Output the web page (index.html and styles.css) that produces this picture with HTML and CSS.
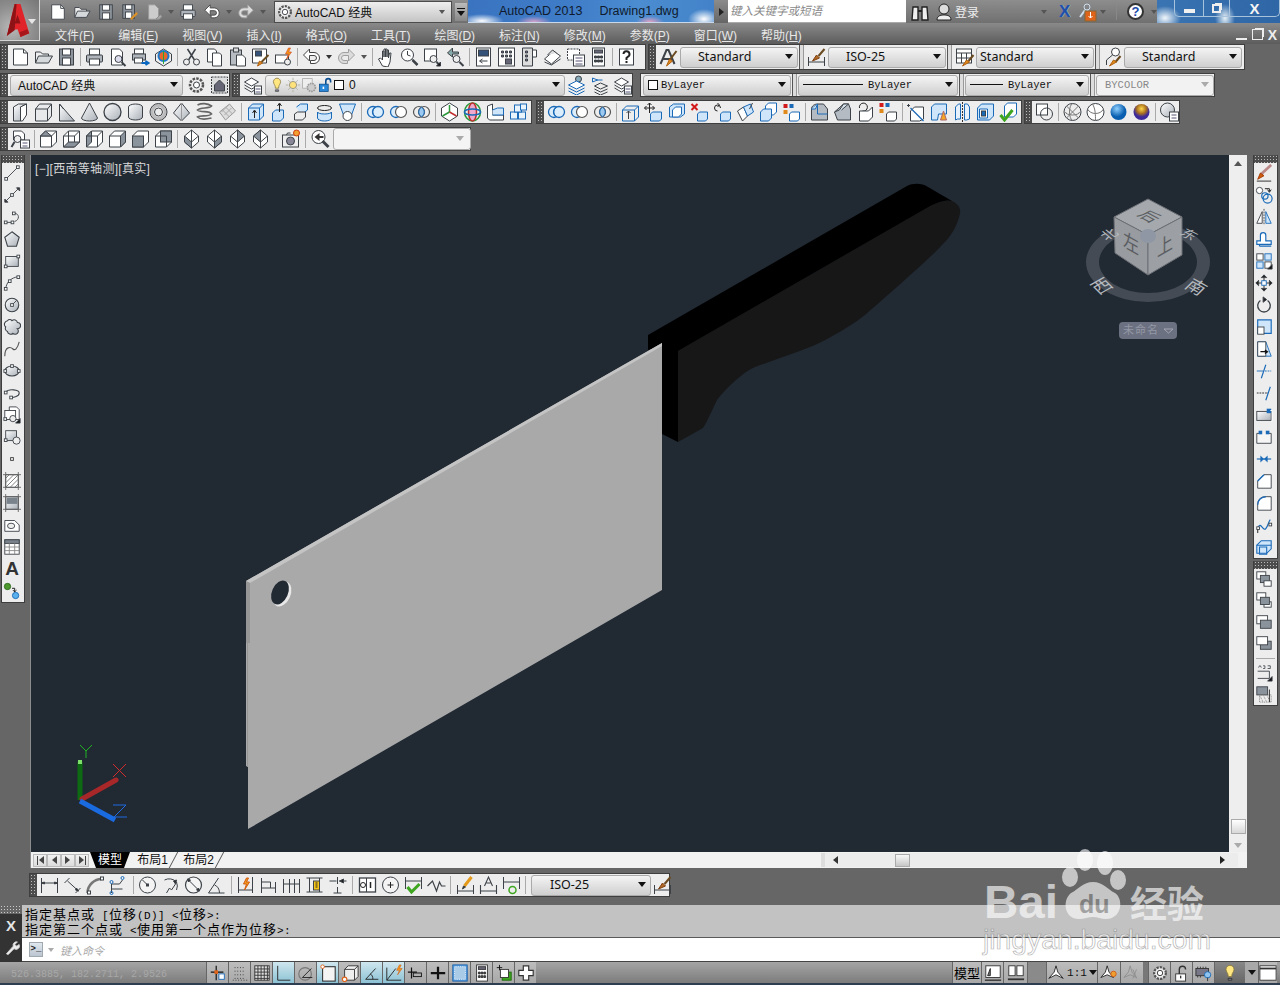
FILE: index.html
```html
<!DOCTYPE html>
<html lang="zh-CN">
<head>
<meta charset="utf-8">
<title>AutoCAD 2013 Drawing1.dwg</title>
<link rel="stylesheet" href="styles.css">
</head>
<body>
<svg class="sprite" aria-hidden="true">
<defs>
<linearGradient id="gs" x1="0" y1="0" x2="1" y2="1"><stop offset="0" stop-color="#fff"/><stop offset="1" stop-color="#a9b0b8"/></linearGradient>
<radialGradient id="gb" cx=".4" cy=".3"><stop offset="0" stop-color="#8fd0ff"/><stop offset="1" stop-color="#0a5fb0"/></radialGradient>
<radialGradient id="gy" cx=".5" cy=".3"><stop offset="0" stop-color="#ffd94a"/><stop offset=".6" stop-color="#a8701f"/><stop offset="1" stop-color="#3d2a9a"/></radialGradient>
<symbol id="new" viewBox="0 0 20 20"><path d="M3 2h10l4 4v12H3z" fill="#fff"/><path d="M13 2v4h4"/></symbol>
<symbol id="open" viewBox="0 0 20 20"><path d="M2 16V5h5l2 2h6v2" fill="#eee"/><path d="M2 16l3-7h14l-4 7z" fill="#d5d9dc"/></symbol>
<symbol id="save" viewBox="0 0 20 20"><rect x="3" y="2" width="14" height="16" fill="#8d949c"/><rect x="6" y="2" width="8" height="6" fill="#fff"/><rect x="6" y="11" width="8" height="7" fill="#fff"/></symbol>
<symbol id="saveas" viewBox="0 0 20 20"><rect x="2" y="2" width="13" height="15" fill="#8d949c"/><rect x="5" y="2" width="7" height="5" fill="#fff"/><rect x="5" y="10" width="7" height="7" fill="#fff"/><path d="M11 18l7-7" stroke="#d9902a" stroke-width="2.5"/></symbol>
<symbol id="plotd" viewBox="0 0 20 20"><path d="M4 2h7l4 4v12H4z" fill="#ccc" stroke="#999"/><path d="M12 18l5-5 2 2-3 3z" fill="#aaa" stroke="#888"/></symbol>
<symbol id="print" viewBox="0 0 20 20"><rect x="5" y="2" width="10" height="6" fill="#fff"/><rect x="2" y="8" width="16" height="7" rx="1" fill="#aeb4ba"/><rect x="5" y="12" width="10" height="6" fill="#fff"/></symbol>
<symbol id="prev" viewBox="0 0 20 20"><path d="M4 2h8l3 3v13H4z" fill="#fff"/><circle cx="11" cy="12" r="3.5" fill="#dde"/><path d="M14 15l4 4" stroke-width="2"/></symbol>
<symbol id="pub" viewBox="0 0 20 20"><rect x="4" y="2" width="9" height="5" fill="#fff"/><rect x="2" y="7" width="13" height="6" fill="#aeb4ba"/><rect x="4" y="11" width="8" height="5" fill="#fff"/><path d="M11 16h6m-2-2l3 2-3 2" stroke="#0a68c0" stroke-width="2"/></symbol>
<symbol id="p3d" viewBox="0 0 20 20"><path d="M2 7l8-5 8 5v7l-8 5-8-5z" fill="#eee"/><circle cx="10" cy="9" r="5" fill="#e7682a" stroke="#1b78cc" stroke-width="2"/><path d="M10 4v13" stroke="#2aa53a"/></symbol>
<symbol id="cut" viewBox="0 0 20 20"><path d="M6 2l7 11M14 2L7 13" stroke-width="1.5"/><circle cx="5" cy="15" r="3" fill="#eee"/><circle cx="15" cy="15" r="3" fill="#eee"/></symbol>
<symbol id="copy" viewBox="0 0 20 20"><path d="M3 2h7l2 2v11H3z" fill="#fff"/><path d="M8 6h7l2 2v11H8z" fill="#fff"/></symbol>
<symbol id="paste" viewBox="0 0 20 20"><rect x="3" y="3" width="11" height="15" fill="#b6bcc2"/><rect x="6" y="1" width="5" height="4" fill="#ddd"/><path d="M9 8h6l3 3v8H9z" fill="#fff"/></symbol>
<symbol id="brush" viewBox="0 0 20 20"><path d="M2 2h14v14H2z" fill="#fff"/><rect x="5" y="4" width="6" height="5" fill="#35527a"/><path d="M18 8l-7 7" stroke="#6a4a20" stroke-width="2"/><path d="M7 19l2-5 3 2z" fill="#e08a1c" stroke="#b06010"/></symbol>
<symbol id="blockl" viewBox="0 0 20 20"><rect x="2" y="8" width="13" height="8" fill="#fff"/><circle cx="14" cy="15" r="3" fill="#eee"/><path d="M15 1l-3 6h3l-2 5 5-7h-3l2-4z" fill="#f59a1a" stroke="#d03a10" stroke-width=".6"/></symbol>
<symbol id="undo" viewBox="0 0 20 20"><path d="M2 8l6-6v3.5h4.500a5.500 5.500 0 0 1 0 11H9v-3h3.500a2.500 2.500 0 0 0 0-5H8V14z" fill="#fff" stroke="#444"/></symbol>
<symbol id="redo" viewBox="0 0 20 20"><path d="M18 8l-6-6v3.500H7.500a5.500 5.500 0 0 0 0 11H11v-3H7.500a2.500 2.500 0 0 1 0-5H12V14z" fill="#dcdcdc" stroke="#a0a0a0"/></symbol>
<symbol id="pan" viewBox="0 0 20 20"><path d="M6 19l-4-7 2-1 2 2V4h1.500v6-8H9v8-8h1.500v8-7H12v8l1-5h1.500l-1 9-2 5z" fill="#fff"/></symbol>
<symbol id="zr" viewBox="0 0 20 20"><circle cx="8" cy="8" r="6" fill="#fff"/><path d="M8 4v4l3 1M12 12l6 6" /><path d="M13 13l5 5" stroke-width="2.500"/></symbol>
<symbol id="zw" viewBox="0 0 20 20"><rect x="2" y="2" width="12" height="12" fill="#fff"/><circle cx="11" cy="12" r="3.500" fill="#eee"/><path d="M14 15l3 3" stroke-width="2"/><path d="M18 15v4h-4z" fill="#111"/></symbol>
<symbol id="zp" viewBox="0 0 20 20"><path d="M7 1L2 6l5 4V7h6V5H7z" fill="#8aa"/><circle cx="11" cy="12" r="3.500" fill="#eee"/><path d="M14 15l4 4" stroke-width="2"/></symbol>
<symbol id="prop" viewBox="0 0 20 20"><rect x="3" y="1" width="14" height="18" fill="#fff"/><rect x="5" y="3" width="10" height="6" fill="#35527a"/><path d="M14 14H7m2-2l-3 2 3 2"/></symbol>
<symbol id="dc" viewBox="0 0 20 20"><rect x="2" y="1" width="16" height="18" fill="#fff"/><path d="M5 4h2v2H5zm4 0h2v2H9zm4 0h2v2h-2zM5 8h2v2H5zm4 0h2v2H9zm4 0h2v2h-2z" fill="#667"/><rect x="9" y="12" width="6" height="5" fill="#667"/></symbol>
<symbol id="tool" viewBox="0 0 20 20"><path d="M3 1h10v18H3z" fill="#ddd"/><path d="M13 3h4v7h-4z" fill="#fff"/><path d="M6 4h2v2H6zm0 4h2v2H6zm0 4h2v2H6z" fill="#778"/></symbol>
<symbol id="sheet" viewBox="0 0 20 20"><path d="M2 12l9-8 7 5-9 8z" fill="#fff"/><path d="M2 15l7 3 9-6" /><path d="M5 8l5-5 4 3" fill="#ddd"/></symbol>
<symbol id="mkup" viewBox="0 0 20 20"><rect x="2" y="2" width="12" height="11" fill="#fff" stroke-dasharray="2 1"/><rect x="8" y="8" width="11" height="11" fill="#fff"/><path d="M10 11h7m-7 3h7m-7 3h7" stroke="#557"/></symbol>
<symbol id="calc" viewBox="0 0 20 20"><rect x="4" y="1" width="12" height="18" fill="#fff"/><rect x="6" y="3" width="8" height="3" fill="#667"/><path d="M6 9h2v2H6zm3 0h2v2H9zm3 0h2v2h-2zm-6 4h2v2H6zm3 0h2v2H9zm3 0h2v2h-2z" fill="#444"/></symbol>
<symbol id="help" viewBox="0 0 20 20"><rect x="3" y="2" width="14" height="16" fill="#fff"/><path d="M7 7a3 3 0 1 1 4 3l-1 1v2M10 14v2" stroke-width="2" stroke="#222"/></symbol>
<symbol id="bstyle" viewBox="0 0 20 20"><path d="M2 17L8 3h2l6 14M5 12h8" stroke-width="2"/><path d="M18 4l-6 8" stroke="#6a4a20" stroke-width="2"/><path d="M8 19l3-7 3 2z" fill="#e08a1c" stroke="#b06010"/></symbol>
<symbol id="bdim" viewBox="0 0 20 20"><path d="M2 10v9M18 10v9M2 15h16"/><path d="M18 2l-6 7" stroke="#6a4a20" stroke-width="2"/><path d="M6 14l4-6 3 3z" fill="#b06a28" stroke="#804010"/></symbol>
<symbol id="btbl" viewBox="0 0 20 20"><rect x="2" y="2" width="15" height="14" fill="#fff"/><path d="M2 6h15M2 11h15M7 6v10M12 6v10"/><path d="M19 8l-5 6" stroke="#6a4a20" stroke-width="2"/><path d="M8 19l4-6 3 2z" fill="#e08a1c" stroke="#b06010"/></symbol>
<symbol id="bml" viewBox="0 0 20 20"><circle cx="13" cy="5" r="4" fill="#fff"/><path d="M10 8L4 13v5"/><path d="M18 9l-5 6" stroke="#6a4a20" stroke-width="2"/><path d="M7 19l4-6 3 2z" fill="#e08a1c" stroke="#b06010"/></symbol>
<symbol id="gear" viewBox="0 0 20 20"><circle cx="10" cy="10" r="6.500" fill="#eee" stroke="#555" stroke-dasharray="2.500 1.200" stroke-width="2.500"/><circle cx="10" cy="10" r="3" fill="#fff"/></symbol>
<symbol id="ws" viewBox="0 0 20 20"><rect x="2" y="2" width="16" height="16" fill="#ddd" stroke-dasharray="2 1"/><path d="M5 10l5-5 5 5v6H5z" fill="#667"/></symbol>
<symbol id="lman" viewBox="0 0 20 20"><path d="M2 7l7-4 7 4-7 4zM2 10l7 4 4-2M2 13l7 4 3-2" fill="#fff"/><rect x="12" y="11" width="7" height="8" fill="#fff"/><path d="M13 14h5m-5 3h5" stroke="#557"/></symbol>
<symbol id="bulb" viewBox="0 0 20 20"><path d="M6 8a4.500 4.500 0 1 1 8 0c-1 2-2 3-2 6H8c0-3-1-4-2-6z" fill="#ffe680" stroke="#8a7a40"/><path d="M8 16h4v2H8z" fill="#889"/></symbol>
<symbol id="sun" viewBox="0 0 20 20"><circle cx="10" cy="10" r="4.500" fill="#ffe27a" stroke="#887"/><path d="M10 1v3m0 12v3M1 10h3m12 0h3M4 4l2 2m8 8l2 2M16 4l-2 2M6 14l-2 2" stroke="#aa9"/></symbol>
<symbol id="fzv" viewBox="0 0 20 20"><rect x="2" y="2" width="12" height="12" fill="#eee" stroke="#aaa"/><circle cx="13" cy="13" r="5" fill="#ccc" stroke="#999" stroke-dasharray="2 1" stroke-width="2"/></symbol>
<symbol id="lock" viewBox="0 0 20 20"><rect x="3" y="9" width="11" height="9" fill="#2a87d8" stroke="#0d4f90"/><path d="M11 9V5a3 3 0 0 1 6 0v2" stroke="#0d4f90" stroke-width="2"/><path d="M8 12v3" stroke="#fff" stroke-width="2"/></symbol>
<symbol id="lmk" viewBox="0 0 20 20"><circle cx="12" cy="4" r="3" fill="#8ab"/><path d="M2 10l8-4 8 4-8 4z" fill="#fff" stroke="#1a6ab8"/><path d="M2 13l8 4 8-4M2 16l8 4 8-4" stroke="#1a6ab8"/></symbol>
<symbol id="lprev" viewBox="0 0 20 20"><path d="M3 3l5 2-5 2zM7 5h6" stroke="#1a6ab8"/><path d="M5 11l6-3 7 3-7 3zM5 14l6 3 7-3M5 17l6 3 7-3"/></symbol>
<symbol id="psolid" viewBox="0 0 20 20"><path d="M3 5l5-3h8l-6 3v14H3z" fill="url(#gs)"/><path d="M10 5l6-3v11l-4 6h-2z" fill="#fff"/></symbol>
<symbol id="box" viewBox="0 0 20 20"><path d="M2 7l4-5h12v12l-4 5H2z" fill="#e7e9eb"/><path d="M2 7h12v12M14 7l4-5"/></symbol>
<symbol id="wedge" viewBox="0 0 20 20"><path d="M3 2l15 17H3z" fill="url(#gs)"/><path d="M3 2l4 5"/></symbol>
<symbol id="cone" viewBox="0 0 20 20"><path d="M10 1L2 16a8 3 0 0 0 16 0z" fill="url(#gs)"/></symbol>
<symbol id="sphere" viewBox="0 0 20 20"><circle cx="10" cy="10" r="8.500" fill="url(#gs)" stroke-width="1.300"/></symbol>
<symbol id="cyl" viewBox="0 0 20 20"><path d="M3 5a7 3 0 0 1 14 0v10a7 3 0 0 1-14 0z" fill="url(#gs)"/></symbol>
<symbol id="torus" viewBox="0 0 20 20"><circle cx="10" cy="10" r="6.500" stroke="#bbb" stroke-width="3"/><circle cx="10" cy="10" r="8.500"/><circle cx="10" cy="10" r="4"/></symbol>
<symbol id="pyr" viewBox="0 0 20 20"><path d="M10 1l8 10-8 8-8-8z" fill="url(#gs)"/><path d="M10 1v18" stroke="#999"/></symbol>
<symbol id="helix" viewBox="0 0 20 20"><path d="M3 3c4-2 10-2 14 1-2 3-11 1-14 4 3 3 12 0 14 4-3 3-11 1-14 3 3 3 10 2 14 1" stroke="#666" stroke-width="1.700"/></symbol>
<symbol id="plane" viewBox="0 0 20 20"><path d="M2 10l10-8 6 7-10 9z" fill="#ddd" stroke="#999"/><path d="M5 8l7 7M8 5l7 7M7 13l7-7M4 10l7-7" stroke="#aaa"/></symbol>
<symbol id="ext" viewBox="0 0 20 20"><path d="M3 6l4-4h11v12l-4 4H3z" fill="#cfe6fa" stroke="#1a6ab8"/><path d="M3 6h11v12M14 6l4-4" stroke="#1a6ab8"/><path d="M9 16V9m-2 2l2-3 2 3" stroke="#222"/></symbol>
<symbol id="pp" viewBox="0 0 20 20"><path d="M4 11l3-3h8v8l-3 3H4z" fill="#cfe6fa" stroke="#1a6ab8"/><path d="M11 10V2M9 4l2-3 2 3" stroke="#222"/></symbol>
<symbol id="sweep" viewBox="0 0 20 20"><path d="M5 5l4-3h7v6l-4 3H8" fill="#cfe6fa" stroke="#1a6ab8"/><path d="M3 12l3-2h8v5l-3 3H3z" fill="#eee"/></symbol>
<symbol id="rev" viewBox="0 0 20 20"><ellipse cx="10" cy="6" rx="7" ry="2.500" stroke="#222"/><path d="M3 10a7 2 0 0 0 14 0v6a7 3 0 0 1-14 0z" fill="#cfe6fa" stroke="#1a6ab8"/></symbol>
<symbol id="loft" viewBox="0 0 20 20"><path d="M2 2h16l-4 11H6z" fill="#cfe6fa" stroke="#1a6ab8"/><circle cx="10" cy="14" r="4.500" fill="#fff"/></symbol>
<symbol id="uni" viewBox="0 0 20 20"><circle cx="7.500" cy="10" r="5.500" fill="#dcedfb" stroke="#1a6ab8" stroke-width="1.300"/><circle cx="12.500" cy="10" r="5.500" fill="#dcedfb" stroke="#1a6ab8" stroke-width="1.300"/><path d="M10 5.200a5.500 5.500 0 0 0 0 9.600" stroke="#1a6ab8"/></symbol>
<symbol id="sub" viewBox="0 0 20 20"><circle cx="7.500" cy="10" r="5.500" fill="#dcedfb" stroke="#1a6ab8" stroke-width="1.300"/><circle cx="12.500" cy="10" r="5.500" fill="#fff" stroke="#555" stroke-width="1.200"/></symbol>
<symbol id="int" viewBox="0 0 20 20"><circle cx="7.500" cy="10" r="5.500" stroke="#555" stroke-width="1.200"/><circle cx="12.500" cy="10" r="5.500" stroke="#555" stroke-width="1.200"/><path d="M10 5.200a5.500 5.500 0 0 1 0 9.600 5.500 5.500 0 0 1 0-9.600z" fill="#9cc9ef" stroke="#1a6ab8"/></symbol>
<symbol id="gmove" viewBox="0 0 20 20"><path d="M10 1l8 5v8l-8 5-8-5V6z" fill="#fff"/><path d="M10 10V3" stroke="#2a9a3a" stroke-width="1.500"/><path d="M10 10l-7 4" stroke="#2a9a3a" stroke-width="1.500"/><path d="M10 10l7 4" stroke="#c03030" stroke-width="1.500"/></symbol>
<symbol id="grot" viewBox="0 0 20 20"><ellipse cx="10" cy="10" rx="8" ry="9" stroke="#2a9a3a" stroke-width="1.500"/><ellipse cx="10" cy="10" rx="4" ry="9" fill="#eac" stroke="#c03030" stroke-width="1.500"/><ellipse cx="10" cy="10" rx="8" ry="3" stroke="#1a6ab8" stroke-width="1.500"/></symbol>
<symbol id="galign" viewBox="0 0 20 20"><path d="M2 16V4l5-2v11h11v5H4z" fill="#fff"/><path d="M7 8l5-2h6v7H7" fill="#cfe6fa" stroke="#1a6ab8"/></symbol>
<symbol id="garr" viewBox="0 0 20 20" stroke="#1a6ab8"><rect x="2" y="10" width="7" height="7" fill="#eaf4fd"/><rect x="10" y="10" width="7" height="7" fill="#eaf4fd"/><rect x="6" y="3" width="7" height="7" fill="#eaf4fd"/><rect x="12" y="2" width="6" height="6" fill="#eaf4fd"/></symbol>
<symbol id="cimp" viewBox="0 0 20 20"><path d="M2 8l4-4h12v11l-4 4H2z" fill="#eee" stroke="#1a6ab8"/><path d="M2 8h12v11M14 8l4-4" stroke="#1a6ab8"/><path d="M8 17V9m-2 2l2-2 2 2"/></symbol>
<symbol id="cmove" viewBox="0 0 20 20"><path d="M6 1v10M1 6h10M4 3l2-2 2 2M3 4L1 6l2 2M9 4l2 2-2 2" stroke="#222"/><path d="M7 12l2-2h9v7l-2 2H7z" fill="#cfe6fa" stroke="#1a6ab8"/></symbol>
<symbol id="cext" viewBox="0 0 20 20"><path d="M3 5l4-3h11v10l-4 3H3z" fill="#cfe6fa" stroke="#1a6ab8"/><path d="M6 8l3-3h6v7l-3 3H6z" fill="#fff" stroke="#1a6ab8"/></symbol>
<symbol id="cdel" viewBox="0 0 20 20"><path d="M2 2l6 6M8 2L2 8" stroke="#d21a1a" stroke-width="2"/><path d="M8 12l2-2h8v7l-2 2H8z" fill="#cfe6fa" stroke="#1a6ab8"/></symbol>
<symbol id="crot" viewBox="0 0 20 20"><path d="M8 6a3 3 0 1 0-3 3M5 1l2 2-2 2" stroke="#222"/><path d="M8 12l2-2h8v7l-2 2H8z" fill="#cfe6fa" stroke="#1a6ab8"/></symbol>
<symbol id="ctap" viewBox="0 0 20 20"><path d="M2 9l6-4 4 9-5 5z" fill="#fff"/><path d="M8 5l7-3 3 8-6 4z" fill="#cfe6fa" stroke="#1a6ab8"/><path d="M14 7l3-6"/></symbol>
<symbol id="ccopy" viewBox="0 0 20 20"><path d="M7 4l3-3h8v9l-3 3H7z" fill="#fff" stroke="#1a6ab8"/><path d="M2 10l3-3h8v9l-3 3H2z" fill="#cfe6fa" stroke="#1a6ab8"/></symbol>
<symbol id="ccol" viewBox="0 0 20 20"><rect x="2" y="2" width="4" height="4" fill="#d21a1a" stroke="none"/><rect x="8" y="2" width="4" height="4" fill="#1a6ab8" stroke="none"/><rect x="2" y="8" width="4" height="4" fill="#e08a1c" stroke="none"/><path d="M8 12l2-2h8v7l-2 2H8z" fill="#fff" stroke="#1a6ab8"/></symbol>
<symbol id="efil" viewBox="0 0 20 20"><path d="M2 7c0-3 3-5 6-5h6l4 5v11H2z" fill="#b4bbc3"/><path d="M2 7l6-5M8 2v10h10" stroke="#1a6ab8"/><path d="M8 2l-2 5H2" fill="#cfe6fa" stroke="#1a6ab8"/></symbol>
<symbol id="echa" viewBox="0 0 20 20"><path d="M2 10l9-8h5l2 5v11H5z" fill="#b4bbc3"/><path d="M2 10l5-2 4-6h5l-7 6" fill="#d7e4ee"/></symbol>
<symbol id="ecol" viewBox="0 0 20 20"><path d="M4 6a4 4 0 1 1 3 3" stroke="#222" fill="none"/><path d="M4 9h9l4-4v10l-4 4H4z" fill="#fff"/></symbol>
<symbol id="ecc" viewBox="0 0 20 20"><rect x="1" y="1" width="4" height="4" fill="#d21a1a" stroke="none"/><rect x="7" y="1" width="4" height="4" fill="#1a6ab8" stroke="none"/><rect x="1" y="7" width="4" height="4" fill="#e08a1c" stroke="none"/><path d="M8 12l2-2h8v7l-2 2H8z" fill="#fff"/></symbol>
<symbol id="slice" viewBox="0 0 20 20"><path d="M2 5v-3m-1.500 1.500h3"/><path d="M4 9l4-4h9v12l-4 2H4z" fill="#fff"/><path d="M4 6l13 13" stroke="#1a6ab8" stroke-width="1.300"/></symbol>
<symbol id="imp" viewBox="0 0 20 20"><path d="M2 5l3-3h12v10H9l-1 6H2z" fill="#cfe6fa" stroke="#1a6ab8"/><path d="M14 9l-3 9h6z" fill="#f5a623" stroke="#a66"/></symbol>
<symbol id="sep3" viewBox="0 0 20 20"><path d="M3 5l3-3h2v15H5l-2 1zM12 2h3l2 3v12l-3 1h-2z" fill="#e6f1fb" stroke="#1a6ab8"/><path d="M10 0v20" stroke-dasharray="2 1" stroke="#333"/></symbol>
<symbol id="shell" viewBox="0 0 20 20"><path d="M2 6l4-4h12v12l-4 4H2z" fill="#cfe6fa" stroke="#1a6ab8"/><path d="M4 7h8v9H4z" fill="#fff" stroke="#1a6ab8"/><rect x="6" y="9" width="4" height="5" fill="#1a6ab8"/></symbol>
<symbol id="chk" viewBox="0 0 20 20"><path d="M6 4l3-3h9v11l-3 3H6z" fill="#fff" stroke="#1a6ab8"/><path d="M2 13l4 5 8-10" stroke="#3da51f" stroke-width="3"/></symbol>
<symbol id="sub2" viewBox="0 0 20 20"><rect x="2" y="2" width="11" height="11" fill="#fff"/><circle cx="12" cy="12" r="6"/></symbol>
<symbol id="swire" viewBox="0 0 20 20"><circle cx="10" cy="10" r="8.500" fill="#eee"/><path d="M4 4l12 12M16 4L4 16M3 10a7 3 0 0 0 14 0M10 2a3 8 0 0 0 0 16" stroke="#777"/></symbol>
<symbol id="shid" viewBox="0 0 20 20"><circle cx="10" cy="10" r="8.500" fill="#fff"/><path d="M2 7c3 6 13 6 16 0M7 2c3 5 3 11 3 17" stroke="#777"/></symbol>
<symbol id="sblue" viewBox="0 0 20 20"><circle cx="10" cy="10" r="8" fill="url(#gb)" stroke="none"/></symbol>
<symbol id="sgold" viewBox="0 0 20 20"><circle cx="10" cy="10" r="8" fill="url(#gy)" stroke="none"/></symbol>
<symbol id="smgr" viewBox="0 0 20 20"><circle cx="8" cy="8" r="7" fill="url(#gs)"/><rect x="10" y="10" width="9" height="9" fill="#fff"/><path d="M12 13h5m-5 3h5" stroke="#557"/></symbol>
<symbol id="vmgr" viewBox="0 0 20 20"><path d="M3 2h8l3 3v6H3z" fill="#fff"/><circle cx="7" cy="10" r="3.500" fill="#eee"/><path d="M4 13l-3 5" stroke-width="2"/><rect x="10" y="11" width="9" height="8" fill="#fff"/><path d="M12 14h5m-5 3h5" stroke="#557"/></symbol>
<symbol id="v1" viewBox="0 0 20 20"><path d="M7 2h11v11l-5 5H2V7z" fill="#fff"/><path d="M2 7h11v11M13 7l5-5"/><path d="M7 2l6 5H2z" fill="#8a929b"/></symbol>
<symbol id="v2" viewBox="0 0 20 20"><path d="M7 2h11v11l-5 5H2V7z" fill="#fff"/><path d="M2 7h11v11M13 7l5-5"/><path d="M2 18l5-5h11l-5 5z" fill="#8a929b"/><path d="M7 2v11"/></symbol>
<symbol id="v3" viewBox="0 0 20 20"><path d="M7 2h11v11l-5 5H2V7z" fill="#fff"/><path d="M2 7l5-5v11l-5 5z" fill="#8a929b"/><path d="M2 7h11v11M13 7l5-5"/></symbol>
<symbol id="v4" viewBox="0 0 20 20"><path d="M7 2h11v11l-5 5H2V7z" fill="#fff"/><path d="M13 7l5-5v11l-5 5z" fill="#8a929b"/><path d="M2 7h11v11"/></symbol>
<symbol id="v5" viewBox="0 0 20 20"><path d="M7 2h11v11l-5 5H2V7z" fill="#fff"/><rect x="2" y="7" width="11" height="11" fill="#8a929b"/></symbol>
<symbol id="v6" viewBox="0 0 20 20"><path d="M7 2h11v11l-5 5H2V7z" fill="#fff"/><rect x="7" y="2" width="11" height="11" fill="#8a929b"/><path d="M2 7h11v11"/></symbol>
<symbol id="iso1" viewBox="0 0 20 20"><path d="M10 1l7 6v6l-7 6-7-6V7z" fill="#fff"/><path d="M3 7l7 6v6l-7-6z" fill="#8a929b"/><path d="M10 1v12l7-6"/></symbol>
<symbol id="iso2" viewBox="0 0 20 20"><path d="M10 1l7 6v6l-7 6-7-6V7z" fill="#fff"/><path d="M17 7l-7 6v6l7-6z" fill="#8a929b"/><path d="M10 1v12L3 7"/></symbol>
<symbol id="iso3" viewBox="0 0 20 20"><path d="M10 1l7 6v6l-7 6-7-6V7z" fill="#fff"/><path d="M10 1l7 6-7 6z" fill="#8a929b"/><path d="M3 7l7 6v6"/></symbol>
<symbol id="iso4" viewBox="0 0 20 20"><path d="M10 1l7 6v6l-7 6-7-6V7z" fill="#fff"/><path d="M10 1L3 7l7 6z" fill="#8a929b"/><path d="M17 7l-7 6v6"/></symbol>
<symbol id="cam" viewBox="0 0 20 20"><rect x="2" y="6" width="16" height="12" fill="#eee"/><circle cx="10" cy="12" r="4" fill="#889"/><path d="M6 6l1-2h3"/><circle cx="16" cy="4" r="3" fill="#f0a030" stroke="#d03a10"/></symbol>
<symbol id="vback" viewBox="0 0 20 20"><circle cx="8" cy="8" r="6.500" fill="#fff"/><path d="M4 8l5-4v3h4v2H9v3z" fill="#333" stroke="none"/><path d="M12 12l6 6" stroke-width="3"/></symbol>
<symbol id="line" viewBox="0 0 20 20"><path d="M4 16L16 4"/><rect x="2" y="15" width="3" height="3" fill="#fff"/><rect x="15" y="2" width="3" height="3" fill="#fff"/></symbol>
<symbol id="xline" viewBox="0 0 20 20"><path d="M3 17L17 3"/><path d="M15 2h3.500v3.500zM2 14.500V18h3.500z" fill="#333"/><rect x="8.500" y="8.500" width="3" height="3" fill="#fff"/></symbol>
<symbol id="pline" viewBox="0 0 20 20"><path d="M3 16h8M13 6c5 0 6 7 0 9"/><rect x="1.500" y="14.500" width="3" height="3" fill="#fff"/><rect x="9" y="14.500" width="3" height="3" fill="#fff"/><rect x="10.500" y="4.500" width="3" height="3" fill="#fff"/></symbol>
<symbol id="polyg" viewBox="0 0 20 20"><path d="M10 2l8 6-3 10H5L2 8z" fill="url(#gs)" stroke-width="1.200"/></symbol>
<symbol id="rect" viewBox="0 0 20 20"><rect x="3" y="5" width="14" height="11" fill="url(#gs)"/><rect x="1.500" y="14.500" width="3" height="3" fill="#fff"/><rect x="15.500" y="3.500" width="3" height="3" fill="#fff"/></symbol>
<symbol id="arc" viewBox="0 0 20 20"><path d="M3 16C4 9 9 4 17 3"/><rect x="1.500" y="15" width="3" height="3" fill="#fff"/><rect x="15.500" y="2" width="3" height="3" fill="#fff"/><rect x="6" y="6.500" width="3" height="3" fill="#fff"/></symbol>
<symbol id="circ" viewBox="0 0 20 20"><circle cx="10" cy="10" r="7.500" fill="url(#gs)" stroke-width="1.200"/><path d="M10 10l5-5"/><rect x="8.500" y="8.500" width="3" height="3" fill="#fff"/></symbol>
<symbol id="cloud" viewBox="0 0 20 20"><path d="M5 3a3 3 0 0 1 5 0 3.500 3.500 0 0 1 6 2 3.500 3.500 0 0 1 0 7 3.500 3.500 0 0 1-5 5 3.500 3.500 0 0 1-6-2 3.500 3.500 0 0 1-2-5 4 4 0 0 1 2-7z" fill="url(#gs)" stroke-width="1.200"/></symbol>
<symbol id="spline" viewBox="0 0 20 20"><path d="M2 18C2 6 9 8 11 10s5 0 7-8" stroke-width="1.200" stroke="#555"/></symbol>
<symbol id="ell" viewBox="0 0 20 20"><ellipse cx="10" cy="10" rx="8" ry="5.500" fill="url(#gs)" stroke-width="1.200"/><rect x="8.500" y="3" width="3" height="3" fill="#fff"/><rect x="1" y="8.500" width="3" height="3" fill="#fff"/><rect x="16" y="8.500" width="3" height="3" fill="#fff"/></symbol>
<symbol id="ellarc" viewBox="0 0 20 20"><path d="M3 9c3-4 15-3 15 1s-6 5-9 5" stroke-width="1.200"/><rect x="1.500" y="8" width="3" height="3" fill="#fff"/><rect x="7.500" y="13.500" width="3" height="3" fill="#fff"/></symbol>
<symbol id="ins" viewBox="0 0 20 20"><path d="M7 1h8l3 3v11H7z" fill="#fff"/><rect x="2" y="5" width="12" height="10" fill="#fff"/><circle cx="11" cy="14" r="3.500" fill="#eee"/><rect x="1" y="13" width="3" height="3" fill="#fff"/><path d="M19 14v5h-5z" fill="#111"/></symbol>
<symbol id="mkb" viewBox="0 0 20 20"><rect x="3" y="3" width="12" height="11" fill="url(#gs)"/><circle cx="15" cy="14" r="4" fill="#eee"/><rect x="1.500" y="12" width="3" height="3" fill="#fff"/></symbol>
<symbol id="pt" viewBox="0 0 20 20"><rect x="8.500" y="8.500" width="3" height="3" fill="#fff" stroke="#333"/></symbol>
<symbol id="hatch" viewBox="0 0 20 20"><rect x="3" y="3" width="14" height="14" fill="#fff"/><path d="M3 7l4-4M3 12l9-9M3 17L17 3M8 17l9-9M13 17l4-4" stroke="#777"/><path d="M0 3h20M0 17h20M3 0v20M17 0v20" stroke="#666"/></symbol>
<symbol id="grad" viewBox="0 0 20 20"><rect x="3" y="3" width="14" height="14" fill="url(#gs)"/><rect x="4" y="4" width="12" height="7" fill="#7a838c" stroke="none"/><path d="M0 3h20M0 17h20M3 0v20M17 0v20" stroke="#666"/></symbol>
<symbol id="reg" viewBox="0 0 20 20"><path d="M2 5h11l5 5v7H2z" fill="#fff"/><ellipse cx="9" cy="11" rx="4" ry="3" fill="#eee"/></symbol>
<symbol id="tbl" viewBox="0 0 20 20"><rect x="2" y="2" width="16" height="16" fill="#fff"/><rect x="2" y="2" width="16" height="4" fill="#7a838c"/><path d="M2 10h16M2 14h16M7 6v12M13 6v12" stroke="#888"/></symbol>
<symbol id="addsel" viewBox="0 0 20 20"><circle cx="5" cy="5" r="3.500" fill="#4f9a2e" stroke="#2d6a1a"/><path d="M10 7h3v4m-2-2l2 2 2-2" stroke="#111"/><circle cx="14" cy="15" r="3.500" fill="#5ab0ec" stroke="#1a6ab8"/></symbol>
<symbol id="erase" viewBox="0 0 20 20"><path d="M18 1L7 11" stroke="#b88" stroke-width="3"/><path d="M3 17l3-7 4 3z" fill="#d05a10" stroke="#a03a00"/><path d="M2 19h16" stroke="#222"/></symbol>
<symbol id="copy2" viewBox="0 0 20 20"><circle cx="5" cy="5" r="3.500" fill="#fff"/><path d="M11 3h5v3m-2-2l2 3 2-3" stroke="#111"/><circle cx="14" cy="14" r="5" fill="none" stroke="#1a6ab8" stroke-width="1.300"/><circle cx="11" cy="11" r="3.500" stroke="#1a6ab8" stroke-width="1.300"/></symbol>
<symbol id="mirror" viewBox="0 0 20 20"><path d="M2 17L8 4v13z" fill="#fff"/><path d="M18 17L12 4v13z" fill="#cfe6fa" stroke="#1a6ab8"/><path d="M10 1v18" stroke-dasharray="2 1"/></symbol>
<symbol id="offs" viewBox="0 0 20 20"><path d="M2 16v-4h4V6a3 3 0 0 1 6 0v6h6v4z" fill="#fff" stroke="#1a6ab8" stroke-width="1.300"/><path d="M5 18v-2M18 18H5" stroke="#1a6ab8" stroke-width="1.300"/></symbol>
<symbol id="arr" viewBox="0 0 20 20"><rect x="2" y="2" width="7" height="7" fill="#fff"/><rect x="11" y="2" width="7" height="7" fill="#cfe6fa" stroke="#1a6ab8"/><rect x="2" y="11" width="7" height="7" fill="#cfe6fa" stroke="#1a6ab8"/><rect x="11" y="11" width="7" height="7" fill="#fff"/><path d="M19 14v5h-5z" fill="#111"/></symbol>
<symbol id="move" viewBox="0 0 20 20"><path d="M10 1v18M1 10h18" stroke="#222"/><path d="M10 1l-3 3h6zM10 19l-3-3h6zM1 10l3-3v6zM19 10l-3-3v6z" fill="#222"/><rect x="7.500" y="7.500" width="5" height="5" fill="#fff" stroke="#1a6ab8"/></symbol>
<symbol id="rot" viewBox="0 0 20 20"><path d="M14 5a7 7 0 1 1-8 0" stroke-width="1.500"/><path d="M9 1l4 3-4 3z" fill="#222"/></symbol>
<symbol id="scale" viewBox="0 0 20 20"><path d="M3 2h15v15H3z" fill="#cfe6fa" stroke="#1a6ab8" stroke-width="1.300"/><rect x="3" y="10" width="7" height="8" fill="#fff"/></symbol>
<symbol id="stretch" viewBox="0 0 20 20"><path d="M3 2h9l6 16H3z" fill="#cfe6fa" stroke="#1a6ab8"/><path d="M3 2h9v16H3z" fill="#fff"/><path d="M6 13h8m-3-2l3 2-3 2" stroke="#111" stroke-width="1.300"/></symbol>
<symbol id="trim" viewBox="0 0 20 20"><path d="M2 10h7" stroke="#1a6ab8"/><path d="M11 10h7" stroke="#1a6ab8" stroke-dasharray="2 1"/><path d="M7 18l5-15" stroke="#1a6ab8" stroke-width="1.300"/></symbol>
<symbol id="ext2" viewBox="0 0 20 20"><path d="M2 10h9" stroke="#222" stroke-dasharray="2 1"/><path d="M11 10h3"/><path d="M12 18l5-15" stroke="#1a6ab8" stroke-width="1.300"/></symbol>
<symbol id="brkp" viewBox="0 0 20 20"><rect x="2" y="6" width="16" height="10" fill="url(#gs)"/><rect x="13" y="3" width="5" height="5" fill="#1a6ab8" stroke="none"/><path d="M17 5h2v12h-1" stroke="#fff"/></symbol>
<symbol id="brk" viewBox="0 0 20 20"><path d="M6 6H2v11h16V6h-4" fill="#f5f5f5"/><rect x="4" y="3" width="4" height="4" fill="#1a6ab8" stroke="none"/><rect x="12" y="3" width="4" height="4" fill="#1a6ab8" stroke="none"/></symbol>
<symbol id="join" viewBox="0 0 20 20"><path d="M2 10h16" stroke="#1a6ab8" stroke-width="1.300"/><path d="M6 6l4 4-4 4zM14 6l-4 4 4 4z" fill="#1a6ab8" stroke="none"/></symbol>
<symbol id="cham" viewBox="0 0 20 20"><path d="M3 10l7-7h8v15H3z" fill="#fff"/><path d="M3 10l7-7" stroke="#1a6ab8" stroke-width="1.500"/></symbol>
<symbol id="fil" viewBox="0 0 20 20"><path d="M3 18V11a8 8 0 0 1 8-8h7v15z" fill="#fff"/><path d="M3 12a9 9 0 0 1 9-9" stroke="#1a6ab8" stroke-width="1.500"/></symbol>
<symbol id="ped" viewBox="0 0 20 20"><path d="M3 14c3-10 6 4 9 0s3-8 5-10" stroke="#1a6ab8" stroke-width="1.300"/><path d="M3 14v5" stroke="#444" stroke-width="1.300"/><rect x="2" y="12" width="3" height="3" fill="#fff"/><rect x="15.500" y="8" width="3" height="3" fill="#fff"/></symbol>
<symbol id="expl" viewBox="0 0 20 20"><path d="M2 8l5-5h11v9l-5 5H2z" fill="#cfe6fa" stroke="#1a6ab8" stroke-width="1.200"/><path d="M5 10h8v8H5zM2 8h16" stroke="#1a6ab8" stroke-width="1.200"/></symbol>
<symbol id="d1" viewBox="0 0 20 20"><rect x="2" y="2" width="10" height="8" fill="#fff"/><rect x="6" y="6" width="10" height="8" fill="#8a929b"/><rect x="10" y="12" width="8" height="6" fill="#fff"/></symbol>
<symbol id="d2" viewBox="0 0 20 20"><rect x="2" y="2" width="10" height="8" fill="#fff"/><rect x="10" y="12" width="8" height="6" fill="#fff"/><rect x="6" y="7" width="10" height="8" fill="#8a929b"/></symbol>
<symbol id="d3" viewBox="0 0 20 20"><rect x="2" y="3" width="12" height="9" fill="#fff"/><rect x="6" y="8" width="12" height="9" fill="#8a929b"/></symbol>
<symbol id="d4" viewBox="0 0 20 20"><rect x="6" y="8" width="12" height="9" fill="#8a929b"/><rect x="2" y="3" width="12" height="9" fill="#fff"/></symbol>
<symbol id="txtf" viewBox="0 0 20 20"><path d="M4 4l1-2h1l1 2M9 2h2v3H9M14 2h3v3h-3" stroke-width=".9"/><path d="M3 8h13v8H3" /><path d="M19 14v5h-5z" fill="#111"/></symbol>
<symbol id="hatb" viewBox="0 0 20 20"><rect x="2" y="2" width="12" height="9" fill="#8a929b"/><path d="M6 13l3 6M10 13l3 6M14 13l3 6M5 11h13v8H5z" stroke="#777" stroke-dasharray="1 1"/><path d="M16 5v14" stroke="#222"/></symbol>
<symbol id="dlin" viewBox="0 0 20 20"><path d="M2 3v15M18 3v15M2 8h16"/><path d="M2 8l3-1v2zM18 8l-3-1v2z" fill="#222"/></symbol>
<symbol id="dali" viewBox="0 0 20 20"><path d="M2 8l5-5M13 18l5-5M5 6l11 10"/><path d="M16 16l-3-1 1-2z" fill="#222"/></symbol>
<symbol id="darc" viewBox="0 0 20 20"><path d="M2 18c0-8 7-14 14-14" stroke-width="2.500" stroke="#777"/><rect x="15" y="2" width="3" height="3" fill="#fff"/><rect x="2" y="16" width="3" height="3" fill="#fff"/></symbol>
<symbol id="dord" viewBox="0 0 20 20"><path d="M3 18V9h8l3-4M3 14h11" /><circle cx="3" cy="7" r="1.500" stroke="#1a6ab8"/><circle cx="3" cy="18" r="1.500" stroke="#1a6ab8"/><circle cx="14" cy="3" r="1.500" stroke="#1a6ab8"/></symbol>
<symbol id="drad" viewBox="0 0 20 20"><circle cx="10" cy="10" r="8" fill="#f4f4f4"/><path d="M10 10L5 5" /><rect x="9" y="9" width="2" height="2"/></symbol>
<symbol id="djog" viewBox="0 0 20 20"><path d="M4 5a10 10 0 0 1 12 2 10 10 0 0 1 0 8"/><path d="M6 18l3-5 2 2 4-6"/><path d="M15 9l1-4-3 1z" fill="#222"/></symbol>
<symbol id="ddia" viewBox="0 0 20 20"><circle cx="10" cy="10" r="8" fill="#f4f4f4" stroke-width="1.200"/><path d="M4 4l12 12"/><path d="M4 4l3 1-2 2zM16 16l-3-1 2-2z" fill="#222"/></symbol>
<symbol id="dang" viewBox="0 0 20 20"><path d="M2 18h16M2 18L12 3M8 10c3 1 5 4 5 8"/></symbol>
<symbol id="dqk" viewBox="0 0 20 20"><path d="M3 2v16M17 2v16M3 15h14"/><path d="M11 3l-3 6h3l-2 6 5-8h-3l2-4z" fill="#f59a1a" stroke="#d05a10"/></symbol>
<symbol id="dbase" viewBox="0 0 20 20"><path d="M3 3v15M17 7v11M12 7v6M3 7h9M3 13h14"/></symbol>
<symbol id="dcont" viewBox="0 0 20 20"><path d="M2 4v14M8 4v14M13 4v14M18 4v14M2 9h16"/></symbol>
<symbol id="dspc" viewBox="0 0 20 20"><path d="M2 3h16M2 17h16M5 3v14M15 3v14"/><rect x="9" y="6" width="6" height="9" fill="#f5c518"/><path d="M11 8h2m-2 2h2m-2 2h2" stroke="#222"/></symbol>
<symbol id="dbrk" viewBox="0 0 20 20"><path d="M10 2v7M10 12v6M6 18h8M2 6h7M12 6h7"/><path d="M12 6l4-2v4z" fill="#222"/></symbol>
<symbol id="dtol" viewBox="0 0 20 20"><rect x="2" y="3" width="16" height="14" fill="#fff" stroke-width="1.300"/><path d="M9 3v14"/><circle cx="5.500" cy="10" r="2.500" stroke="#222"/><path d="M13 7v6" stroke="#222" stroke-width="1.500"/></symbol>
<symbol id="dcen" viewBox="0 0 20 20"><circle cx="10" cy="10" r="8" fill="#f4f4f4"/><path d="M10 7v6M7 10h6" stroke="#222"/></symbol>
<symbol id="dins" viewBox="0 0 20 20"><path d="M2 2v12M18 2v12M2 6h16"/><path d="M4 12l4 5 8-8" stroke="#3da51f" stroke-width="3"/></symbol>
<symbol id="djl" viewBox="0 0 20 20"><path d="M1 11l5-5 4 10 3-9 2 4h4" stroke-width="1.200"/></symbol>
<symbol id="ded" viewBox="0 0 20 20"><path d="M2 10v9M18 10v9M2 16h16"/><path d="M16 2l-7 9" stroke="#e59a1a" stroke-width="3"/><path d="M7 14l1-3 2 1z" fill="#222"/></symbol>
<symbol id="dte" viewBox="0 0 20 20"><path d="M2 10v9M18 10v9M2 16h16M6 11l4-9 4 9M8 8h4" stroke-width="1.100"/></symbol>
<symbol id="dup" viewBox="0 0 20 20"><path d="M2 2v12M18 2v12M2 7h16"/><circle cx="11" cy="15" r="3.500" stroke="#3da51f" stroke-width="1.500"/></symbol>
<symbol id="st1" viewBox="0 0 20 20"><path d="M8 2v16M2 9h14" stroke="#111" stroke-width="1.300"/><rect x="11" y="11" width="6" height="6" fill="#fff" stroke="#1a6ab8"/><rect x="6" y="7" width="4" height="4" fill="#e0631a" stroke="none"/></symbol>
<symbol id="st2" viewBox="0 0 20 20"><path d="M4 4h12M4 8h12M4 12h12M4 16h12M2 18h16" stroke="#333" stroke-dasharray="1 2"/></symbol>
<symbol id="st3" viewBox="0 0 20 20"><rect x="2" y="2" width="16" height="16" fill="#ddd"/><path d="M2 5.500h16M2 9h16M2 12.500h16M2 16h16M5.500 2v16M9 2v16M12.500 2v16M16 2v16"/></symbol>
<symbol id="st4" viewBox="0 0 20 20"><path d="M3 2v16h14" stroke="#222"/></symbol>
<symbol id="st5" viewBox="0 0 20 20"><circle cx="9" cy="11" r="7" stroke="#777" stroke-width="1.300"/><path d="M6 15L16 5M6 15h11" stroke="#222"/></symbol>
<symbol id="st6" viewBox="0 0 20 20"><rect x="4" y="3" width="14" height="16" fill="#f4f4f4" stroke-width="1.200"/><circle cx="4" cy="3" r="2" fill="#fff" stroke="#e0631a"/></symbol>
<symbol id="st7" viewBox="0 0 20 20"><path d="M4 6l4-4h11v12l-4 4H4z" fill="#eee"/><path d="M4 6h11v12M15 6l4-4"/><circle cx="4" cy="17" r="2.500" fill="#fff" stroke="#e0631a" stroke-width="1.300"/></symbol>
<symbol id="st8" viewBox="0 0 20 20"><path d="M3 17L14 5M3 17h14M8 11c2 1 3 3 3 6" stroke="#222"/></symbol>
<symbol id="st9" viewBox="0 0 20 20"><path d="M2 18l10-13M2 18h16M2 18V4" stroke="#222"/><path d="M16 1l-3 6h3l-2 5 5-7h-3l2-4z" fill="#f59a1a" stroke="#d05a10" stroke-width=".6"/></symbol>
<symbol id="st10" viewBox="0 0 20 20"><path d="M5 4v12M1 9h10" stroke="#111" stroke-width="1.300"/><rect x="7" y="10" width="9" height="4" stroke="#111"/></symbol>
<symbol id="st11" viewBox="0 0 20 20"><path d="M10 3v14M2 10h16" stroke="#111" stroke-width="2.500"/></symbol>
<symbol id="st12" viewBox="0 0 20 20"><rect x="2" y="1" width="16" height="18" fill="#5aa0e0" stroke="#1a5fa8"/><path d="M4 3h12v14H4z" fill="#a9cbe8" stroke="#fff" stroke-dasharray="1 1"/></symbol>
<symbol id="st14" viewBox="0 0 20 20"><path d="M2 4h6M5 1v6" stroke="#111"/><rect x="8" y="9" width="10" height="9" fill="#3da51f" stroke="#1e6a0a"/><rect x="6" y="6" width="9" height="9" fill="#fff"/></symbol>
<symbol id="st15" viewBox="0 0 20 20"><path d="M7 2h6v5h5v6h-5v5H7v-5H2V7h5z" fill="#fff" stroke-width="1.300"/></symbol>
<symbol id="st16" viewBox="0 0 20 20"><rect x="2" y="2" width="16" height="13" fill="#fff"/><path d="M7 13V5l-3 8z" stroke="#222" fill="#777"/><path d="M1 18h18" stroke-width="1.500"/></symbol>
<symbol id="st17" viewBox="0 0 20 20"><rect x="2" y="2" width="7" height="11" fill="#fff"/><rect x="11" y="2" width="7" height="11" fill="#fff"/><path d="M1 17h18" stroke-width="2"/></symbol>
<symbol id="anno" viewBox="0 0 20 20"><path d="M10 2l2 7 6 7-8-4-8 4 6-7z" fill="#fff" stroke="#222"/></symbol>
<symbol id="anno2" viewBox="0 0 20 20"><path d="M8 2l2 7 5 6-7-3-7 3 5-6z" fill="#fff" stroke="#222"/><circle cx="15" cy="11" r="3" fill="#f0a030" stroke="#d05a10"/></symbol>
<symbol id="anno3" viewBox="0 0 20 20"><path d="M8 2l2 7 5 6-7-3-7 3 5-6zM15 6l-4 10M11 6l4 10" stroke="#8f8f8f"/></symbol>
<symbol id="tsb" viewBox="0 0 20 20"><rect x="3" y="11" width="11" height="8" fill="#fff"/><path d="M7 11V6a3.500 3.500 0 0 1 7 0" stroke-width="1.500"/><path d="M8.500 13v3" stroke-width="1.500"/></symbol>
<symbol id="hw" viewBox="0 0 20 20"><rect x="1" y="5" width="14" height="8" fill="#778"/><path d="M3 3v2m3-2v2m3-2v2m3-2v2M3 13v2m3-2v2" stroke="#333"/><circle cx="14" cy="12" r="3.500" fill="#8fc4f0" stroke="#1a6ab8"/><path d="M14 15v4"/></symbol>
<symbol id="clean" viewBox="0 0 20 20"><rect x="1" y="2" width="18" height="16" fill="#fff"/><path d="M1 5h18" stroke-width="2"/></symbol>
</defs>
</svg>

<div class="app">
  <header class="head">
    <div class="appbtn">
      <svg class="alogo" viewBox="0 0 40 41"><path d="M7 37L15 4h6l9 30-9 4-3-8-6 1z" fill="#e0242a"/><path d="M7 37L15 4l2 0-2 27z" fill="#8f1216"/><path d="M15 24l3-9 3 9z" fill="#8f1216"/><path d="M21 38l9-4-2-4-8 3z" fill="#a8161b"/></svg>
      <i class="tri appar"></i>
    </div>
    <div class="headr">
      <div class="titlebar">
        <div class="qat">
          <svg class="i q"><use href="#new"/></svg><svg class="i q"><use href="#open"/></svg><svg class="i q"><use href="#save"/></svg><svg class="i q"><use href="#saveas"/></svg><svg class="i q"><use href="#plotd"/></svg>
          <span class="arw"><i class="tri sm"></i></span>
          <svg class="i q"><use href="#print"/></svg><svg class="i q"><use href="#undo"/></svg>
          <span class="arw"><i class="tri sm"></i></span>
          <svg class="i q"><use href="#redo"/></svg>
          <span class="arw"><i class="tri sm"></i></span>
          <div class="wscombo"><svg class="i g"><use href="#gear"/></svg><span>AutoCAD 经典</span><i class="tri sm end"></i></div>
          <div class="qbtn"><i class="bar"></i><i class="tri blk"></i></div>
        </div>
        <div class="glass"><span class="t1">AutoCAD 2013</span><span class="t2">Drawing1.dwg</span></div>
        <div class="sbtn"><i class="tri right"></i></div>
        <div class="search">键入关键字或短语</div>
        <div class="tools">
          <svg class="ht" viewBox="0 0 20 20"><path d="M3 5h5v13H2zM12 5h5l1 13h-6z" fill="#eee" stroke="#222" stroke-width="1.400"/><path d="M8 9h4" stroke="#222" stroke-width="2"/></svg>
          <svg class="ht nm" viewBox="0 0 20 20"><circle cx="10" cy="7" r="5" fill="#ddd" stroke="#222"/><path d="M3 18c0-5 5-5 7-5s7 0 7 5z" fill="#eee" stroke="#222"/></svg>
          <span class="login">登录</span>
          <i class="tri sm t-a"></i>
          <span class="xbtn">X</span>
          <svg class="ht hd" viewBox="0 0 20 20"><circle cx="10" cy="5" r="3" stroke="#cde" fill="none"/><path d="M3 15l5-7M10 8l4 7" stroke="#cde" stroke-width="2"/><rect x="8" y="9" width="11" height="10" fill="#e0631a" stroke="#863"/><path d="M13.500 10v6m-2-2l2 2 2-2" stroke="#fff" fill="none"/></svg>
          <i class="tri sm t-b"></i>
          <span class="hsep"></span>
          <span class="hq">?</span>
          <i class="tri sm t-c"></i>
        </div>
        <div class="winctl">
          <div class="winframe"><span class="wb mn"><i class="wmin"></i></span><span class="wb"><i class="wmax"></i></span><span class="wb close">X</span></div>
        </div>
      </div>
      <nav class="menubar">
        <span>文件(<u>F</u>)</span><span>编辑(<u>E</u>)</span><span>视图(<u>V</u>)</span><span>插入(<u>I</u>)</span><span>格式(<u>O</u>)</span><span>工具(<u>T</u>)</span><span>绘图(<u>D</u>)</span><span>标注(<u>N</u>)</span><span>修改(<u>M</u>)</span><span>参数(<u>P</u>)</span><span>窗口(<u>W</u>)</span><span>帮助(<u>H</u>)</span>
        <div class="mdi"><i class="m1"></i><i class="m2"></i><b>X</b></div>
      </nav>
    </div>
  </header>

  <section class="rows">
    <div class="row">
      <div class="tb w-a"><i class="grip"></i>
        <svg class="i"><use href="#new"/></svg><svg class="i"><use href="#open"/></svg><svg class="i"><use href="#save"/></svg><i class="sep"></i>
        <svg class="i"><use href="#print"/></svg><svg class="i"><use href="#prev"/></svg><svg class="i"><use href="#pub"/></svg><svg class="i"><use href="#p3d"/></svg><i class="sep"></i>
        <svg class="i"><use href="#cut"/></svg><svg class="i"><use href="#copy"/></svg><svg class="i"><use href="#paste"/></svg><svg class="i"><use href="#brush"/></svg><svg class="i"><use href="#blockl"/></svg><i class="sep"></i>
        <svg class="i"><use href="#undo"/></svg><span class="arw s"><i class="tri sm k"></i></span><svg class="i"><use href="#redo"/></svg><span class="arw s"><i class="tri sm"></i></span><i class="sep"></i>
        <svg class="i"><use href="#pan"/></svg><svg class="i"><use href="#zr"/></svg><svg class="i"><use href="#zw"/></svg><svg class="i"><use href="#zp"/></svg><i class="sep"></i>
        <svg class="i"><use href="#prop"/></svg><svg class="i"><use href="#dc"/></svg><svg class="i"><use href="#tool"/></svg><svg class="i"><use href="#sheet"/></svg><svg class="i"><use href="#mkup"/></svg><svg class="i"><use href="#calc"/></svg><i class="sep"></i>
        <svg class="i"><use href="#help"/></svg>
      </div>
      <div class="tb w-b"><i class="grip"></i>
        <svg class="i"><use href="#bstyle"/></svg>
        <div class="combo cs"><span>Standard</span><i class="tri blk"></i></div><i class="dsep"></i>
        <svg class="i"><use href="#bdim"/></svg>
        <div class="combo cs"><span>ISO-25</span><i class="tri blk"></i></div><i class="dsep"></i>
        <svg class="i"><use href="#btbl"/></svg>
        <div class="combo cs left"><span>Standard</span><i class="tri blk"></i></div><i class="dsep"></i>
        <svg class="i"><use href="#bml"/></svg>
        <div class="combo cs"><span>Standard</span><i class="tri blk"></i></div>
      </div>
    </div>
    <div class="row">
      <div class="tb w-c"><i class="grip"></i>
        <div class="combo c-ws"><span>AutoCAD 经典</span><i class="tri blk"></i></div>
        <svg class="i"><use href="#gear"/></svg><svg class="i"><use href="#ws"/></svg>
      </div>
      <div class="tb w-d"><i class="grip"></i>
        <svg class="i"><use href="#lman"/></svg>
        <div class="combo c-layer">
          <svg class="ls"><use href="#bulb"/></svg><svg class="ls"><use href="#sun"/></svg><svg class="ls"><use href="#fzv"/></svg><svg class="ls"><use href="#lock"/></svg><i class="sw"></i><span>0</span><i class="tri blk"></i>
        </div>
        <svg class="i"><use href="#lmk"/></svg><svg class="i"><use href="#lprev"/></svg><svg class="i"><use href="#lman"/></svg>
      </div>
      <div class="tb w-e">
        <div class="combo mono c-col"><i class="sw"></i><span>ByLayer</span><i class="tri blk"></i></div><i class="dsep"></i>
        <div class="combo mono c-lt"><i class="ln l1"></i><span>ByLayer</span><i class="tri blk"></i></div><i class="dsep"></i>
        <div class="combo mono c-lw"><i class="ln l2"></i><span>ByLayer</span><i class="tri blk"></i></div><i class="dsep"></i>
        <div class="combo mono off c-pl"><span>BYCOLOR</span><i class="tri"></i></div>
      </div>
    </div>
    <div class="row">
      <div class="tb w-f"><i class="grip"></i>
        <svg class="i"><use href="#psolid"/></svg><svg class="i"><use href="#box"/></svg><svg class="i"><use href="#wedge"/></svg><svg class="i"><use href="#cone"/></svg><svg class="i"><use href="#sphere"/></svg><svg class="i"><use href="#cyl"/></svg><svg class="i"><use href="#torus"/></svg><svg class="i"><use href="#pyr"/></svg><svg class="i"><use href="#helix"/></svg><svg class="i"><use href="#plane"/></svg><i class="sep"></i>
        <svg class="i"><use href="#ext"/></svg><svg class="i"><use href="#pp"/></svg><svg class="i"><use href="#sweep"/></svg><svg class="i"><use href="#rev"/></svg><svg class="i"><use href="#loft"/></svg><i class="sep"></i>
        <svg class="i"><use href="#uni"/></svg><svg class="i"><use href="#sub"/></svg><svg class="i"><use href="#int"/></svg><i class="sep"></i>
        <svg class="i"><use href="#gmove"/></svg><svg class="i"><use href="#grot"/></svg><svg class="i"><use href="#galign"/></svg><svg class="i"><use href="#garr"/></svg>
      </div>
      <div class="tb w-g"><i class="grip"></i>
        <svg class="i"><use href="#uni"/></svg><svg class="i"><use href="#sub"/></svg><svg class="i"><use href="#int"/></svg><i class="sep"></i>
        <svg class="i"><use href="#cimp"/></svg><svg class="i"><use href="#cmove"/></svg><svg class="i"><use href="#cext"/></svg><svg class="i"><use href="#cdel"/></svg><svg class="i"><use href="#crot"/></svg><svg class="i"><use href="#ctap"/></svg><svg class="i"><use href="#ccopy"/></svg><svg class="i"><use href="#ccol"/></svg><i class="sep"></i>
        <svg class="i"><use href="#efil"/></svg><svg class="i"><use href="#echa"/></svg><svg class="i"><use href="#ecol"/></svg><svg class="i"><use href="#ecc"/></svg><i class="sep"></i>
        <svg class="i"><use href="#slice"/></svg><svg class="i"><use href="#imp"/></svg><svg class="i"><use href="#sep3"/></svg><svg class="i"><use href="#shell"/></svg><svg class="i"><use href="#chk"/></svg>
      </div>
      <div class="tb w-h"><i class="grip"></i>
        <svg class="i"><use href="#sub2"/></svg><i class="sep"></i>
        <svg class="i"><use href="#swire"/></svg><svg class="i"><use href="#shid"/></svg><svg class="i"><use href="#sblue"/></svg><svg class="i"><use href="#sgold"/></svg><i class="sep"></i>
        <svg class="i"><use href="#smgr"/></svg>
      </div>
    </div>
    <div class="row">
      <div class="tb w-i"><i class="grip"></i>
        <svg class="i"><use href="#vmgr"/></svg><i class="sep"></i>
        <svg class="i"><use href="#v1"/></svg><svg class="i"><use href="#v2"/></svg><svg class="i"><use href="#v3"/></svg><svg class="i"><use href="#v4"/></svg><svg class="i"><use href="#v5"/></svg><svg class="i"><use href="#v6"/></svg><i class="sep"></i>
        <svg class="i"><use href="#iso1"/></svg><svg class="i"><use href="#iso2"/></svg><svg class="i"><use href="#iso3"/></svg><svg class="i"><use href="#iso4"/></svg><i class="sep wide"></i>
        <svg class="i"><use href="#cam"/></svg><i class="sep wide"></i>
        <svg class="i"><use href="#vback"/></svg>
        <div class="combo blank"><i class="tri"></i></div>
      </div>
    </div>
  </section>

  <main class="work">
    <aside class="dock dl">
      <div class="vtb"><i class="vgrip"></i>
        <svg class="i"><use href="#line"/></svg><svg class="i"><use href="#xline"/></svg><svg class="i"><use href="#pline"/></svg><svg class="i"><use href="#polyg"/></svg><svg class="i"><use href="#rect"/></svg><svg class="i"><use href="#arc"/></svg><svg class="i"><use href="#circ"/></svg><svg class="i"><use href="#cloud"/></svg><svg class="i"><use href="#spline"/></svg><svg class="i"><use href="#ell"/></svg><svg class="i"><use href="#ellarc"/></svg><svg class="i"><use href="#ins"/></svg><svg class="i"><use href="#mkb"/></svg><svg class="i"><use href="#pt"/></svg><svg class="i"><use href="#hatch"/></svg><svg class="i"><use href="#grad"/></svg><svg class="i"><use href="#reg"/></svg><svg class="i"><use href="#tbl"/></svg><span class="bigA">A</span><svg class="i"><use href="#addsel"/></svg>
      </div>
    </aside>
    <div class="vp">
      <div class="vp-top">
        <div class="canvas">
          <span class="vlabel">[−][西南等轴测][真实]</span>
          <svg class="scene" viewBox="31 155 1198 697">
            <path d="M678 351L925 209C935 203 945 199 952 201C958 204 961 208 960 213C958 225 950 238 942 245C930 258 905 280 865 315C848 328 830 338 815 345C795 353 775 360 755 367C742 373 727 387 717 400C712 410 708 420 703 428L678 442Z" fill="#171717"/>
            <path d="M648 335L907 186C913 183 922 183 928 187L952 201C945 199 935 203 925 209L678 351V442L662 434V346L648 350Z" fill="#000"/>
            <path d="M246 581L662 343V590L248 829V767L246 766V643L246 641Z" fill="#a9a9a9"/>
            <path d="M246 581L662 343V346L250 583Z" fill="#c4c4c4"/>
            <path d="M246 581L250 583V643H246ZM247 643H248V767H247Z" fill="#969696"/>
            <ellipse cx="282" cy="594" rx="8.500" ry="13" transform="rotate(24 282 594)" fill="#e8e8e8"/>
            <ellipse cx="280" cy="592.500" rx="8" ry="12.500" transform="rotate(24 280 592.500)" fill="#212933"/>
            <path d="M80 800V762" stroke="#0d6a12" stroke-width="5"/><rect x="78" y="760" width="4" height="4" fill="#7de06a"/>
            <path d="M82 799L116 780" stroke="#a8282a" stroke-width="5" stroke-linecap="round"/>
            <path d="M80 801L115 820" stroke="#1a6ae0" stroke-width="5"/>
            <path d="M80 745l6 6 6-6M86 751v7" stroke="#1fb324" fill="none"/>
            <path d="M113 764l13 13M126 764l-13 13" stroke="#d02c2c" fill="none"/>
            <path d="M113 805h13l-12 12h13" stroke="#1f6ae0" fill="none"/>
            <path fill-rule="evenodd" d="M1086 262a62 40 0 1 0 124 0a62 40 0 1 0-124 0zM1099 262a49 31 0 1 0 98 0a49 31 0 1 0-98 0z" fill="#444b55"/>
            <path d="M1148 199L1182 217 1148 235 1114 217Z" fill="#a5a8ac" stroke="#6c7076"/>
            <path d="M1114 217L1148 235V275L1115 253Z" fill="#989b9f" stroke="#6c7076"/>
            <path d="M1148 235L1182 217V255L1148 275Z" fill="#9c9fa3" stroke="#6c7076"/>
            <ellipse cx="1148" cy="236" rx="8" ry="7" fill="#8f97a5"/>
            <g class="cubetxt">
              <text transform="matrix(.75 .4 -.75 .4 1148 217)">后</text>
              <text transform="matrix(.8 .45 0 1 1131 245)">左</text>
              <text transform="matrix(.8 -.45 0 1 1165 247)">上</text>
            </g>
            <g class="ringtxt">
              <text transform="matrix(.9 -.5 .7 .7 1103 287)">西</text>
              <text transform="matrix(.9 .5 -.7 .7 1195 288)">南</text>
              <text class="rs" transform="matrix(.8 -.4 .6 .5 1110 235)">北</text>
              <text class="rs" transform="matrix(.8 .4 -.6 .5 1188 235)">东</text>
            </g>
            <rect x="1119" y="322" width="58" height="17" rx="4" fill="#6c7181"/>
            <text class="cubename" x="1123" y="334">未命名</text>
            <path d="M1164 329h9l-4.500 4z" fill="none" stroke="#a2a6b3"/>
          </svg>
        </div>
        <div class="vscroll">
          <i class="tri up"></i>
          <span class="fill"></span>
          <i class="vthumb"></i>
          <i class="tri"></i>
        </div>
      </div>
      <div class="tabs">
        <div class="nav"><i class="n n1"></i><i class="n n2"></i><i class="n n3"></i><i class="n n4"></i></div>
        <span class="tab cur">模型</span><span class="tab">布局1</span><span class="tab">布局2</span>
        <span class="tabfill"></span>
        <div class="hscroll"><i class="tri left"></i><i class="hthumb"></i><span class="fill"></span><i class="tri right"></i></div>
      </div>
    </div>
    <aside class="dock dr">
      <div class="vtb"><i class="vgrip"></i>
        <svg class="i"><use href="#erase"/></svg><svg class="i"><use href="#copy2"/></svg><svg class="i"><use href="#mirror"/></svg><svg class="i"><use href="#offs"/></svg><svg class="i"><use href="#arr"/></svg><svg class="i"><use href="#move"/></svg><svg class="i"><use href="#rot"/></svg><svg class="i"><use href="#scale"/></svg><svg class="i"><use href="#stretch"/></svg><svg class="i"><use href="#trim"/></svg><svg class="i"><use href="#ext2"/></svg><svg class="i"><use href="#brkp"/></svg><svg class="i"><use href="#brk"/></svg><svg class="i"><use href="#join"/></svg><svg class="i"><use href="#cham"/></svg><svg class="i"><use href="#fil"/></svg><svg class="i"><use href="#ped"/></svg><svg class="i"><use href="#expl"/></svg>
      </div>
      <div class="vtb second"><i class="vgrip"></i>
        <svg class="i"><use href="#d1"/></svg><svg class="i"><use href="#d2"/></svg><svg class="i"><use href="#d3"/></svg><svg class="i"><use href="#d4"/></svg><i class="hsep2"></i>
        <svg class="i"><use href="#txtf"/></svg><svg class="i"><use href="#hatb"/></svg>
      </div>
    </aside>
  </main>

  <section class="dimrow">
    <div class="tb w-j"><i class="grip"></i>
      <svg class="i"><use href="#dlin"/></svg><svg class="i"><use href="#dali"/></svg><svg class="i"><use href="#darc"/></svg><svg class="i"><use href="#dord"/></svg><i class="sep"></i>
      <svg class="i"><use href="#drad"/></svg><svg class="i"><use href="#djog"/></svg><svg class="i"><use href="#ddia"/></svg><svg class="i"><use href="#dang"/></svg><i class="sep"></i>
      <svg class="i"><use href="#dqk"/></svg><svg class="i"><use href="#dbase"/></svg><svg class="i"><use href="#dcont"/></svg><svg class="i"><use href="#dspc"/></svg><svg class="i"><use href="#dbrk"/></svg><i class="sep"></i>
      <svg class="i"><use href="#dtol"/></svg><svg class="i"><use href="#dcen"/></svg><svg class="i"><use href="#dins"/></svg><svg class="i"><use href="#djl"/></svg><i class="sep"></i>
      <svg class="i"><use href="#ded"/></svg><svg class="i"><use href="#dte"/></svg><svg class="i"><use href="#dup"/></svg><i class="sep"></i>
      <div class="combo c-iso"><span>ISO-25</span><i class="tri blk"></i></div>
      <svg class="i"><use href="#bdim"/></svg>
    </div>
  </section>

  <section class="cmd">
    <div class="cmdside">
      <i class="cgrip"></i>
      <b class="cx">X</b>
      <svg class="wr" viewBox="0 0 20 20"><path d="M4 18l8-9a4 4 0 0 1 5-5l-3 3 2 2 3-2a4 4 0 0 1-6 5l-7 7z" fill="#eee" stroke="#ccc"/></svg>
    </div>
    <div class="cmdmain">
      <div class="cmdhist">
        <div class="hl">指定基点或<span class="lat"> [</span>位移<span class="lat">(D)] &lt;</span>位移<span class="lat">&gt;:</span></div>
        <div class="hl">指定第二个点或<span class="lat"> &lt;</span>使用第一个点作为位移<span class="lat">&gt;:</span></div>
      </div>
      <div class="cmdin"><span class="prompt">&gt;_</span><i class="tri sm"></i><em>键入命令</em></div>
    </div>
  </section>

  <footer class="status">
    <span class="coords">526.3885, 182.2711, 2.9526</span>
    <div class="sgroup">
      <span class="sb"><svg><use href="#st1"/></svg></span><span class="sb"><svg><use href="#st2"/></svg></span><span class="sb"><svg><use href="#st3"/></svg></span><span class="sb on"><svg><use href="#st4"/></svg></span><span class="sb"><svg><use href="#st5"/></svg></span><span class="sb on"><svg><use href="#st6"/></svg></span><span class="sb"><svg><use href="#st7"/></svg></span><span class="sb on"><svg><use href="#st8"/></svg></span><span class="sb on"><svg><use href="#st9"/></svg></span><span class="sb"><svg><use href="#st10"/></svg></span><span class="sb"><svg><use href="#st11"/></svg></span><span class="sb"><svg><use href="#st12"/></svg></span><span class="sb"><svg><use href="#calc"/></svg></span><span class="sb"><svg><use href="#st14"/></svg></span><span class="sb"><svg><use href="#st15"/></svg></span>
    </div>
    <div class="sright">
      <span class="sb txt">模型</span><span class="sb"><svg><use href="#st16"/></svg></span><span class="sb w"><svg><use href="#st17"/></svg></span>
      <span class="sb blankb"></span>
      <span class="sb ann"><svg><use href="#anno"/></svg><span>1:1</span><i class="tri blk"></i></span>
      <span class="sb w2"><svg><use href="#anno2"/></svg></span><span class="sb w2"><svg><use href="#anno3"/></svg></span>
      <span class="sgap"></span>
      <span class="sb"><svg><use href="#gear"/></svg></span><span class="sb"><svg><use href="#tsb"/></svg></span><span class="sb"><svg><use href="#hw"/></svg></span>
      <span class="sb isob"><svg><use href="#bulb"/></svg></span>
      <span class="sarrow"><i class="tri blk"></i></span>
      <span class="sb last"><svg><use href="#clean"/></svg></span>
    </div>
  </footer>

  <svg class="mark" viewBox="980 845 240 125">
    <g fill="#fff">
      <ellipse cx="1085" cy="860" rx="8" ry="11"/><ellipse cx="1105" cy="863" rx="8" ry="12"/><ellipse cx="1070" cy="877" rx="8" ry="10"/><ellipse cx="1118" cy="880" rx="8" ry="10"/>
      <path d="M1093 882c10 0 14 7 22 11 9 6 7 26-9 26-5 0-9-2-13-2s-9 2-14 2c-15 0-17-19-8-26 8-4 12-11 22-11z"/>
    </g>
    <text class="mk-b" x="984" y="918" textLength="74" lengthAdjust="spacingAndGlyphs">Bai</text>
    <text class="mk-du" x="1079" y="913">du</text>
    <text class="mk-c" x="1130" y="918">经验</text>
    <text class="mk-j" x="983" y="949" textLength="228" lengthAdjust="spacingAndGlyphs">jingyan.baidu.com</text>
  </svg>
</div>
</body>
</html>
```
FILE: styles.css
```css
*{box-sizing:border-box}
html,body{margin:0;padding:0;background:#666}
body{font-family:"Liberation Sans","Noto Sans CJK SC",sans-serif;font-size:12px;color:#111;overflow:hidden}
i{display:block;font-style:normal}
.sprite{position:absolute;width:0;height:0;overflow:hidden}
.app{position:relative;width:1280px;height:985px;display:flex;flex-direction:column;background:#666;overflow:hidden}

.tri{width:0;height:0;border-left:4px solid transparent;border-right:4px solid transparent;border-top:5px solid #aaa;flex:none}
.tri.sm{border-left-width:3px;border-right-width:3px;border-top:4px solid #555}
.tri.sm.k{border-top-color:#333}
.tri.blk{border-top-color:#111}
.tri.right{border:4px solid transparent;border-left:5px solid #222;border-right:0}
.tri.left{border:4px solid transparent;border-right:5px solid #333;border-left:0}
.tri.up{border-top:0;border-bottom:5px solid #555}

.head{display:flex;height:44px;flex:none;position:relative}
.appbtn{width:40px;height:41px;flex:none;position:relative;background:radial-gradient(circle at 30% 70%,#b9b9b9,#8f8f8f 55%,#767676);border:1px solid #d4d4d4;border-top:0;border-left:0}
.alogo{display:block;width:39px;height:40px}
.appar{position:absolute;right:3px;top:19px;border-top-color:#e6e6e6}
.headr{flex:1;display:flex;flex-direction:column;min-width:0}
.titlebar{height:23px;display:flex;flex:none}
.qat{width:428px;flex:none;display:flex;align-items:center;padding-left:6px;background:linear-gradient(#8d8d8d,#707070)}
.i{flex:none;width:23px;height:20px;fill:none;stroke:#3c4248;stroke-width:1}
.i.q{width:24px;height:18px}
.i.g{width:20px;height:18px}
.arw{width:10px;display:flex;justify-content:center;flex:none}
.arw.s{width:12px}
.wscombo{width:178px;height:22px;margin-left:6px;display:flex;align-items:center;background:linear-gradient(#efefef,#c4c4c4);border:1px solid #4c4c4c;font-size:12px;color:#111;flex:none}
.wscombo span{flex:1;white-space:nowrap}
.wscombo .end{margin-right:6px}
.qbtn{width:12px;height:18px;margin-left:3px;background:linear-gradient(#bbb,#888);display:flex;flex-direction:column;align-items:center;justify-content:center;gap:2px;flex:none}
.qbtn .bar{width:8px;height:1px;background:#111}
.glass{width:246px;flex:none;display:flex;align-items:center;color:#0f1a2c;font-size:12.500px;padding-left:31px;white-space:nowrap;border-bottom:1px solid #c9d9ea;background:radial-gradient(ellipse 22px 7px at 14px 21px,#fff,transparent),radial-gradient(ellipse 18px 6px at 66px 22px,#d9a3c8,transparent),radial-gradient(ellipse 14px 6px at 182px 22px,#e3a2c0,transparent),radial-gradient(ellipse 16px 10px at 236px 19px,#fff,transparent),linear-gradient(90deg,#3a74c0,#3f7cc8 40%,#4b8dd0 70%,#4382c8)}
.glass .t2{margin-left:17px}
.sbtn{width:14px;flex:none;display:flex;align-items:center;justify-content:center;background:linear-gradient(#8b8b8b,#666)}
.search{width:178px;flex:none;background:#fff;color:#8a8a8a;font-style:italic;font-size:11.500px;line-height:23px;padding-left:2px;white-space:nowrap;border-bottom:1px solid #aaa}
.tools{width:251px;flex:none;display:flex;align-items:center;background:linear-gradient(#8d8d8d,#707070);padding-left:4px}
.ht{width:20px;height:20px;flex:none;margin-right:4px}
.ht.nm{margin-right:1px}
.login{color:#eee;font-size:12px;width:26px;white-space:nowrap}
.t-a{margin-left:62px}
.xbtn{margin-left:12px;width:14px;font:bold 17px "Liberation Sans",sans-serif;color:#1f4fa8;text-shadow:1px 0 #9ab}
.hd{margin-left:6px;margin-right:3px}
.hsep{width:1px;height:16px;background:#888;margin:0 10px}
.hq{width:17px;height:17px;border-radius:50%;background:#fff;border:2px solid #333;color:#1c4aa8;font:bold 13px/14px "Liberation Sans",sans-serif;text-align:center;flex:none}
.t-c{margin-left:7px}
.winctl{flex:1;background:radial-gradient(ellipse 16px 12px at 8px 18px,#f2f7fb,transparent),radial-gradient(ellipse 10px 14px at 68px 18px,#e6f0f6,transparent),linear-gradient(90deg,#3a74b2,#2f66a6);display:flex;justify-content:flex-end}
.winframe{width:106px;height:17px;display:flex;border:1px solid #a7c3dc;border-top:0;border-radius:0 0 5px 5px}
.wb{width:26px;display:flex;align-items:center;justify-content:center;border-right:1px solid #a7c3dc;color:#f4f4f4}
.wb.mn{width:29px}
.wb.close{flex:1;border-right:0;font:bold 15px "Liberation Sans",sans-serif}
.wmin{width:11px;height:4px;background:#f0f0f0;margin-top:5px}
.wmax{width:9px;height:9px;border:2px solid #eee;box-shadow:2px -2px 0 -1px #eee}

.menubar{height:21px;flex:none;display:flex;align-items:center;padding:2px 0 0 15px;gap:24px;color:#e8e8e8;font-size:12px;white-space:nowrap;background:linear-gradient(#8a8a8a,#5c5c5c)}
.menubar span{flex:none}
.menubar u{text-decoration:underline}
.mdi{margin-left:auto;display:flex;align-items:center;gap:5px;padding-right:3px;color:#fff}
.mdi b{font:bold 14px "Liberation Sans",sans-serif;color:#eee}
.m1{width:11px;height:2px;background:#eee;margin-top:8px}
.m2{width:11px;height:11px;border:1px solid #eee;box-shadow:2px -2px 0 -1px #eee}

.rows{flex:none;display:flex;flex-direction:column;gap:3px;height:107px}
.row{display:flex;height:24px;gap:2px;flex:none}
.row:first-child{height:26px}
.tb{display:flex;align-items:center;height:100%;background:#ededed;border:1px solid #3e3e3e;flex:none;white-space:nowrap}
.grip{width:7px;height:100%;flex:none;background:#4c4c4c radial-gradient(circle,#bbb 0.6px,transparent 0.8px) 0 0/3px 3px;margin-right:1px}
.sep{width:1px;height:18px;background:#aaa;margin:0 2px;flex:none}
.sep.wide{margin:0 3px}
.dsep{width:5px;height:100%;flex:none;border-left:1px solid #555;border-right:1px solid #999;background:#ddd;margin:0 1px}
.w-a{width:646px}
.w-b{width:597px}
.w-c{width:230px}
.w-d{width:401px}
.w-e{width:575px;padding-left:2px;margin-left:5px}
.w-f{width:532px}
.w-g{width:486px;margin-left:2px}
.w-h{width:156px}
.w-i{width:471px}
.w-j{width:641px;height:24px;margin-left:29px}
.w-j .sep{margin:0 2.600px}

.combo{display:flex;align-items:center;height:21px;border:1px solid #aaa;border-radius:3px;background:linear-gradient(#f4f4f4,#cfcfcf);font-size:12px;color:#111;padding:0 4px 1px 6px;flex:none;white-space:nowrap}
.combo span{flex:1}
.cs{width:118px;padding-left:3px;font:12.500px "Noto Sans",sans-serif}
.cs span{padding-left:14px}
.cs.left span{padding-left:0}
.c-ws{width:173px;margin:0 1px;padding-left:7px}
.c-ws+.i{margin-left:1px}
.c-layer{width:300px;padding-left:3px;margin:0 0 0 1px}
.ls{width:16px;height:18px;fill:none;stroke:#555;flex:none}
.sw{width:10px;height:10px;background:#fff;border:1px solid #111;flex:none;margin:0 5px 0 1px}
.mono{font:10.500px "Liberation Mono","Liberation Serif",monospace}
.c-col{width:148px;padding-left:3px}
.c-col .sw{margin:0 3px 0 1px}
.c-lt{width:160px;padding-left:4px}
.c-lw{width:124px;padding-left:4px}
.ln{height:1px;background:#111;flex:none}
.l1{width:60px;margin-right:5px}
.l2{width:33px;margin-right:5px}
.c-pl{width:118px;background:#f2f2f2;color:#888;padding-left:8px}
.blank{width:138px;height:22px;background:#f4f4f4;margin-left:1px;justify-content:flex-end;padding-right:6px}
.c-iso{width:120px;margin-left:2px;font:12.500px "Noto Sans",sans-serif}
.c-iso span{padding-left:12px}

.work{flex:none;height:713px;display:flex;margin-top:4px}
.dock{flex:none}
.dl{width:30px;padding-left:1px}
.dr{width:33px;padding-left:6px;display:flex;flex-direction:column;gap:2px}
.vtb{width:24px;display:flex;flex-direction:column;background:#ededed;border:1px solid #3e3e3e;border-top:0}
.vtb .i{height:18px;width:18px;margin:2px 3px 2px 1px}
.vgrip{height:8px;flex:none;background:#4c4c4c radial-gradient(circle,#bbb 0.6px,transparent 0.8px) 0 0/3px 3px;margin-bottom:-1px}
.dr .vtb{width:25px}
.dr .second .i{margin:1.750px 3px 1.750px 1px}
.hsep2{height:1px;background:#aaa;margin:4px 2px 3px;flex:none}
.bigA{height:22px;width:20px;font:bold 19px/22px "Liberation Sans",sans-serif;text-align:center;color:#333;flex:none}

.vp{width:1217px;flex:none;display:flex;flex-direction:column;border-left:1px solid #8d8d8d}
.vp-top{height:697px;display:flex;flex:none}
.canvas{position:relative;width:1198px;background:#212933;flex:none}
.scene{display:block;width:1198px;height:697px}
.vlabel{position:absolute;left:4px;top:7px;color:#d8d8d8;font-size:12px;letter-spacing:.3px;white-space:nowrap;line-height:14px}
.cubetxt text{font:20px "Noto Sans CJK SC",sans-serif;fill:#5a5d62;text-anchor:middle;dominant-baseline:middle}
.ringtxt text{font:18px "Noto Sans CJK SC",sans-serif;fill:#b4b8bd;text-anchor:middle;dominant-baseline:middle}
.ringtxt .rs{font-size:17px}
.cubename{font:11px "Noto Sans CJK SC",sans-serif;fill:#9398a6;letter-spacing:1px}
.vscroll{flex:1;background:#eee;display:flex;flex-direction:column;align-items:center;padding:6px 0 4px}
.vscroll .fill{flex:1}
.vthumb{width:15px;height:15px;background:linear-gradient(#fff,#d8d8d8);border:1px solid #aaa;margin-bottom:9px}
.tabs{height:16px;flex:none;display:flex;align-items:center;background:#f2f2f2;padding-left:2px}
.nav{display:flex;flex:none;width:57px}
.n{width:14px;height:13px;border:1px solid #bbb;background:linear-gradient(#f2f2f2,#dcdcdc);display:flex;align-items:center;justify-content:center;gap:1px}
.n::before,.n::after{content:"";display:block;flex:none}
.n1::before{width:1px;height:9px;background:#444}
.n1::after,.n2::after{border:4.500px solid transparent;border-right:5px solid #444;border-left:0}
.n3::before,.n4::before{border:4.500px solid transparent;border-left:5px solid #444;border-right:0}
.n4::after{width:1px;height:9px;background:#444}
.tab{position:relative;height:16px;line-height:16px;font-size:12px;padding:0 6px;flex:none;color:#111;margin-right:3px;text-align:center;white-space:nowrap}
.tab:not(.cur)::after{content:"";position:absolute;right:0;top:0;width:1px;height:100%;background:#555;transform:skewX(-28deg)}
.tab.cur{background:#000;color:#fff;margin:0 1px 0 0;padding:0;width:40px;clip-path:polygon(0 0,100% 0,calc(100% - 6px) 100%,6px 100%)}
.tab:nth-child(3){width:43px}
.tab:nth-child(4){width:43px}
.tabfill{flex:1}
.hscroll{width:417px;height:14px;display:flex;align-items:center;flex:none;padding:0 13px 0 8px;margin-right:9px;border-left:4px solid #ddd;background:#ececec}
.hthumb{width:15px;height:13px;background:linear-gradient(#f8f8f8,#c6c6c6);border:1px solid #aaa;margin-left:57px}
.hscroll .fill{flex:1}

.dimrow{flex:none;height:24px;margin-top:5px}
.cmd{flex:none;height:57px;margin-top:8px;display:flex}
.cmdside{width:22px;background:#333;display:flex;flex-direction:column;align-items:center;flex:none}
.cgrip{width:100%;height:9px;background:#666 radial-gradient(circle,#ccc .7px,transparent .9px) 0 0/3px 3px}
.cx{font:bold 15px/24px "Liberation Sans",sans-serif;color:#e5e5e5;height:24px}
.wr{width:17px;height:18px}
.cmdmain{flex:1;display:flex;flex-direction:column;min-width:0}
.cmdhist{height:33px;background:#c2c2c2;border-bottom:1px solid #5a5a5a;font:13px/15px "Noto Sans CJK SC",monospace;letter-spacing:1px;padding:1px 0 0 3px;color:#000}
.hl{white-space:pre;height:15px}
.lat{font:11px/15px "Liberation Mono",monospace;letter-spacing:.4px}
.cmdin{flex:1;background:#fff;display:flex;align-items:center;padding-left:7px;border-bottom:1px solid #444}
.prompt{width:14px;height:15px;border:1px solid #a0a8b0;background:linear-gradient(#dfe6ee,#bcc6d0);font:bold 9px/13px "Liberation Mono",monospace;color:#222;text-align:center;flex:none}
.cmdin .tri{margin-left:5px;border-top-color:#aaa}
.cmdin em{margin-left:6px;color:#aaa;font-size:11px}

.status{height:23px;flex:none;display:flex;align-items:center;background:linear-gradient(#a5a5a5,#7c7c7c);border-bottom:2px solid #2c3e50}
.coords{width:206px;flex:none;font:10px "Liberation Mono",monospace;color:#a8a8a8;padding:3px 0 0 11px;white-space:nowrap}
.sgroup{display:flex;flex:none;width:330px;height:100%}
.sb{width:22px;height:100%;flex:none;display:flex;align-items:center;justify-content:center;background:linear-gradient(#bdbdbd,#a8a8a8);border-left:1px solid #666}
.sb.on{background:linear-gradient(#cfe6ee,#8cc2d4)}
.sb svg{width:18px;height:18px;fill:none;stroke:#333;stroke-width:1;flex:none}
.sright{margin-left:auto;display:flex;height:100%;padding-right:3px;flex:none}
.sb.txt{width:29px;color:#000;font-size:13px;white-space:nowrap}
.sb.w{width:24px}
.sb.w svg{width:20px}
.sb.blankb{width:19px;background:#8a8a8a}
.sb.ann{width:51px;gap:2px;color:#111;font:11px "Liberation Mono",monospace}
.sb.w2{width:23px}
.sgap{width:5px;flex:none;background:#777}
.sb.isob{width:31px;background:linear-gradient(#888,#666)}
.sarrow{width:13px;flex:none;display:flex;align-items:center;justify-content:center;background:#a8a8a8}
.sb.last{width:19px}

.mark{position:absolute;left:980px;top:845px;width:240px;height:125px;opacity:.62;pointer-events:none}
.mk-b{font:bold 46px "Liberation Sans",sans-serif;fill:#fff}
.mk-du{font:bold 25px "Liberation Sans",sans-serif;fill:#8f8f8f}
.mk-c{font:bold 37px "Noto Sans CJK SC",sans-serif;fill:#fff}
.mk-j{font:27px "Liberation Sans",sans-serif;fill:#fff;stroke:#8a8a8a;stroke-width:.7}
```
